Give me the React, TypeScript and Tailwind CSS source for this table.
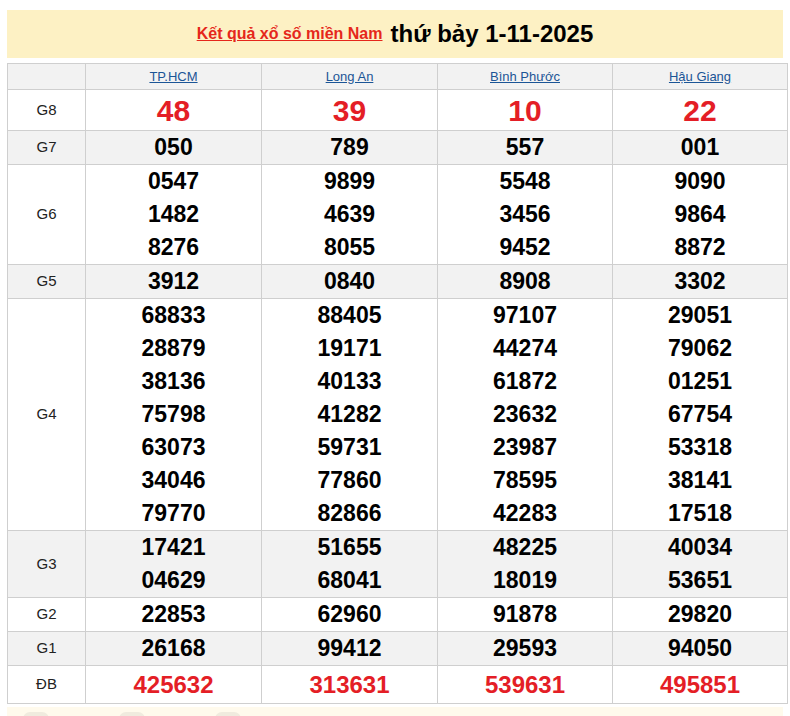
const provinces = ['TP.HCM', 'Long An', 'Bình Phước', 'Hậu Giang'];

type Row = {
  label: string;
  values: string[][];
  height: string;
  gray?: boolean;
  kind?: 'g8' | 'db';
};

const rows: Row[] = [
  { label: 'G8', values: [['48'], ['39'], ['10'], ['22']], height: 'h-[41px]', kind: 'g8' },
  { label: 'G7', values: [['050'], ['789'], ['557'], ['001']], height: 'h-[34px]', gray: true },
  {
    label: 'G6',
    values: [
      ['0547', '1482', '8276'],
      ['9899', '4639', '8055'],
      ['5548', '3456', '9452'],
      ['9090', '9864', '8872'],
    ],
    height: 'h-[100px]',
  },
  { label: 'G5', values: [['3912'], ['0840'], ['8908'], ['3302']], height: 'h-[34px]', gray: true },
  {
    label: 'G4',
    values: [
      ['68833', '28879', '38136', '75798', '63073', '34046', '79770'],
      ['88405', '19171', '40133', '41282', '59731', '77860', '82866'],
      ['97107', '44274', '61872', '23632', '23987', '78595', '42283'],
      ['29051', '79062', '01251', '67754', '53318', '38141', '17518'],
    ],
    height: 'h-[232px]',
  },
  {
    label: 'G3',
    values: [
      ['17421', '04629'],
      ['51655', '68041'],
      ['48225', '18019'],
      ['40034', '53651'],
    ],
    height: 'h-[67px]',
    gray: true,
  },
  { label: 'G2', values: [['22853'], ['62960'], ['91878'], ['29820']], height: 'h-[34px]' },
  { label: 'G1', values: [['26168'], ['99412'], ['29593'], ['94050']], height: 'h-[34px]', gray: true },
  { label: 'ĐB', values: [['425632'], ['313631'], ['539631'], ['495851']], height: 'h-[38px]', kind: 'db' },
];

const cols = 'grid grid-cols-[78px_176px_176px_175px_175px]';

function numClass(kind?: string) {
  if (kind === 'g8') return 'text-[30px] text-[#e41e26]';
  if (kind === 'db') return 'text-[24px] text-[#e41e26]';
  return 'text-[23px] text-black';
}

export default function App() {
  return (
    <div className="w-[790px] h-[716px] overflow-hidden bg-white font-['Liberation_Sans',Arial,sans-serif]">
      <div className="pt-[10px] px-[7px]">
        <div className="h-[48px] bg-[#fdf1c4] flex items-center justify-center gap-[8px]">
          <a href="#" className="text-[16px] font-bold text-[#e5271b] underline">
            Kết quả xổ số miền Nam
          </a>
          <span className="text-[24px] font-bold text-black">thứ bảy 1-11-2025</span>
        </div>

        <div className="mt-[5px] w-[781px] border-l border-t border-[#cfcfcf]">
          <div className={`${cols} h-[26px] bg-[#f2f2f2]`}>
            <div className="border-r border-b border-[#cfcfcf]" />
            {provinces.map((p) => (
              <div
                key={p}
                className="border-r border-b border-[#cfcfcf] flex items-center justify-center"
              >
                <a href="#" className="text-[13px] text-[#1b5596] underline">
                  {p}
                </a>
              </div>
            ))}
          </div>

          {rows.map((r) => (
            <div key={r.label} className={`${cols} ${r.height} ${r.gray ? 'bg-[#f2f2f2]' : 'bg-white'}`}>
              <div className="border-r border-b border-[#cfcfcf] flex items-center justify-center text-[15px] text-[#222]">
                {r.label}
              </div>
              {r.values.map((vals, i) => (
                <div
                  key={i}
                  className="border-r border-b border-[#cfcfcf] flex flex-col items-center justify-center"
                >
                  {vals.map((v, j) => (
                    <div key={j} className={`font-bold leading-[33px] ${numClass(r.kind)}`}>
                      {v}
                    </div>
                  ))}
                </div>
              ))}
            </div>
          ))}
        </div>
      </div>

      <div className="mt-[3px] mx-[7px] h-[20px] bg-[#fffaec] flex items-start gap-[70px] px-[16px]">
        <span className="mt-[5px] w-[26px] h-[7px] rounded-t-full bg-[#f0ebde]" />
        <span className="mt-[5px] w-[26px] h-[7px] rounded-t-full bg-[#f0ebde]" />
        <span className="mt-[5px] w-[26px] h-[7px] rounded-t-full bg-[#f0ebde]" />
      </div>
    </div>
  );
}
